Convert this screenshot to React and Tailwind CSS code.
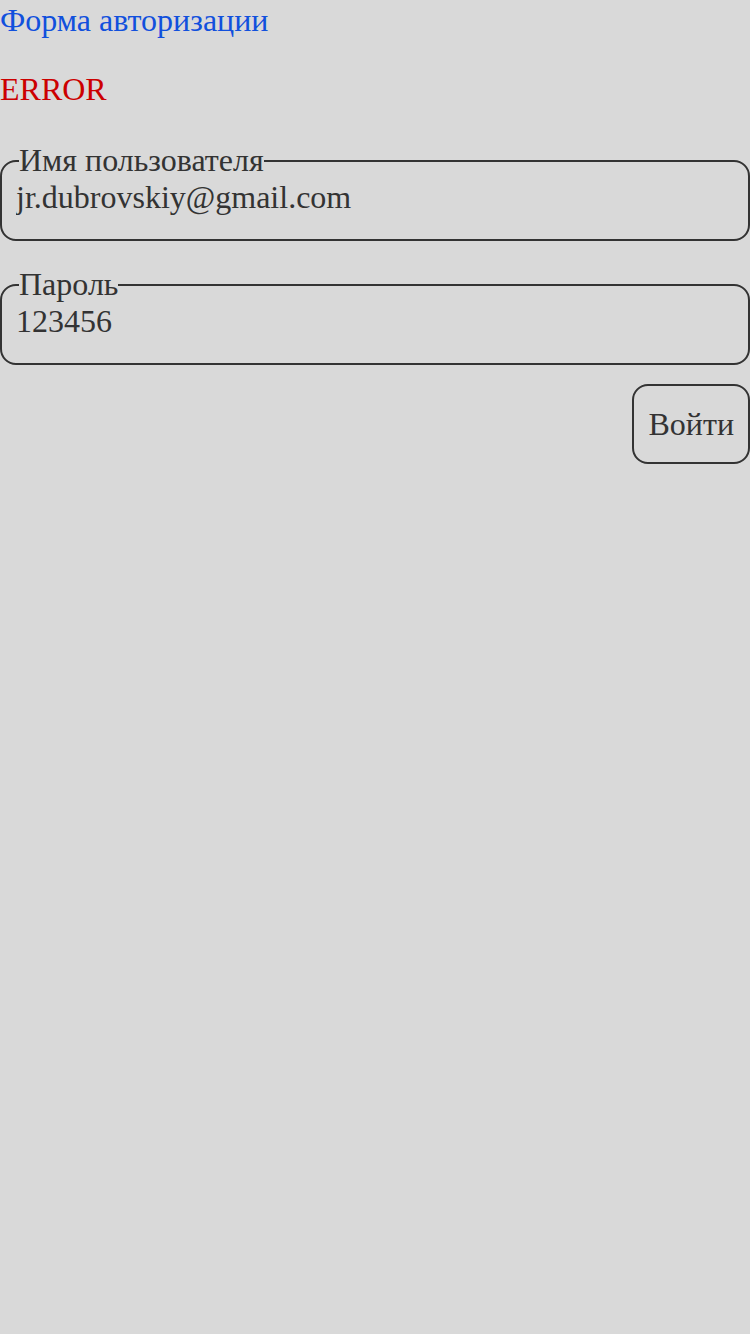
import React, { useState } from 'react';

export default function App() {
  const [username, setUsername] = useState('jr.dubrovskiy@gmail.com');
  const [password, setPassword] = useState('123456');
  const error = 'ERROR';

  return (
    <div className="min-h-screen bg-[#d9d9d9] pt-[2px] font-['Liberation_Serif',serif] text-[32px] leading-[normal] text-[#333]">
      <h1 className="text-[#1150dd] font-normal">Форма авторизации</h1>
      {error && <p className="mt-[32px] text-[#cc0000]">{error}</p>}

      <form className="mt-[34px] flex flex-col" onSubmit={e => e.preventDefault()}>
        <fieldset className="border-2 border-[#333] rounded-2xl px-[14px] pt-0 pb-[23px]">
          <legend className="ml-[3px] px-0">Имя пользователя</legend>
          <input
            value={username}
            onChange={e => setUsername(e.target.value)}
            className="w-full bg-transparent outline-none p-0"
          />
        </fieldset>

        <fieldset className="mt-[25px] border-2 border-[#333] rounded-2xl px-[14px] pt-0 pb-[23px]">
          <legend className="ml-[3px] px-0">Пароль</legend>
          <input
            value={password}
            onChange={e => setPassword(e.target.value)}
            className="w-full bg-transparent outline-none p-0"
          />
        </fieldset>

        <div className="mt-[19px] flex justify-end">
          <button
            type="submit"
            className="h-[80px] px-[14px] border-2 border-[#333] rounded-2xl"
          >Войти</button>
        </div>
      </form>
    </div>
  );
}
